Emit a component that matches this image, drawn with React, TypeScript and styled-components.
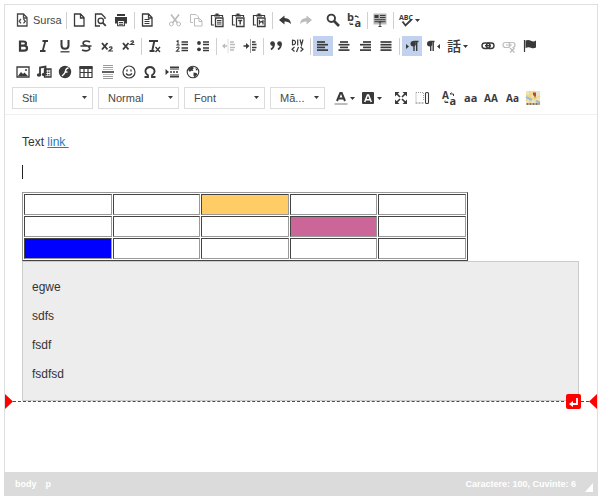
import React from 'react';
import styled, { createGlobalStyle } from 'styled-components';

const INK = '#3a3a3a';

const GlobalStyle = createGlobalStyle`
  *, *::before, *::after { box-sizing: border-box; }
  body {
    margin: 0;
    background: #fff;
    color: #333;
    font-family: "Liberation Sans", Arial, sans-serif;
    font-size: 12px;
  }
`;

const Page = styled.div`
  display: flex;
  flex-direction: column;
  min-height: 100vh;
  padding: 4px 5px 6px 4px;
`;

const Frame = styled.div`
  flex: 1;
  display: flex;
  flex-direction: column;
  border: 1px solid #dfdfdf;
`;

const Toolbar = styled.div`
  padding: 2px 0 3px 8px;
  border-bottom: 1px solid #f0f0f0;
`;

const Row = styled.div<{ $outdent?: boolean }>`
  display: flex;
  align-items: center;
  height: 26px;
  margin-left: ${p => (p.$outdent ? '-1px' : '0')};
`;

const Group = styled.div<{ $lead?: number }>`
  display: flex;
  align-items: center;
  gap: 1px;
  margin-left: ${p => p.$lead ?? 0}px;
`;

const Separator = styled.span`
  width: 1px;
  height: 17px;
  margin: 0 2px 0 3px;
  background: #d0d0d0;
`;

const ToolButton = styled.button<{ $on?: boolean; $menu?: boolean }>`
  display: flex;
  align-items: center;
  gap: 1px;
  width: ${p => (p.$menu ? 26 : 20)}px;
  height: 20px;
  padding: 0 2px;
  border: 0;
  background: ${p => (p.$on ? '#c1d2ee' : 'transparent')};
  color: ${INK};
  &:disabled { color: #bcbcbc; }
`;

const SourceButton = styled(ToolButton)`
  gap: 3px;
  width: 50px;
  padding: 0 0 0 1px;
  color: #484848;
  font: 11px "Liberation Sans", Arial, sans-serif;
`;

const Svg = styled.svg`
  flex: none;
  display: block;
  width: 16px;
  height: 16px;
  overflow: visible;
  fill: none;
  stroke: currentColor;
  text { fill: currentColor; stroke: none; font-family: "Open Sans", "Noto Sans CJK JP", sans-serif; font-weight: 700; }
`;

const CaretSvg = styled.svg`
  flex: none;
  width: 5px;
  height: 3px;
  fill: ${INK};
`;

const Picker = styled.label<{ $narrow?: boolean }>`
  position: relative;
  width: ${p => (p.$narrow ? 55 : 81)}px;
  margin-right: ${p => (p.$narrow ? 6 : 5)}px;
  select {
    display: block;
    width: 100%;
    height: 22px;
    padding: 0 0 0 9px;
    border: 1px solid #dcdcdc;
    border-radius: 0;
    appearance: none;
    background: #fff;
    color: #484848;
    font: 11px "Liberation Sans", Arial, sans-serif;
  }
  svg { position: absolute; right: 6px; top: 9px; pointer-events: none; }
`;

const Editable = styled.div`
  flex: 1;
  padding: 19px 18px 0 17px;
  line-height: 17px;
  outline: none;
  p { margin: 0 0 12px; }
  a { color: #2a7ab8; white-space: pre; }
`;

const TextCursor = styled.span`
  display: block;
  width: 1px;
  height: 14px;
  background: #222;
`;

const CursorLine = styled.p`
  display: flex;
  align-items: center;
  height: 17px;
`;

const Table = styled.table`
  width: 80%;
  border: 1px solid;
  border-color: #999 #444 #444 #999;
  border-collapse: separate;
  border-spacing: 1px;
  table-layout: fixed;
`;

const Cell = styled.td<{ $fill?: string }>`
  height: 21px;
  padding: 1px;
  border: 1px solid;
  border-color: #444 #999 #999 #444;
  background: ${p => p.$fill ?? 'transparent'};
`;

const Block = styled.div`
  padding: 17px 9px 5px;
  border: 1px solid #ccc;
  background: #ededed;
`;

const MagicLine = styled.div`
  position: relative;
  display: flex;
  align-items: center;
  justify-content: space-between;
  height: 15px;
  margin: -7px -18px 0 -17px;
`;

const Dashes = styled.span`
  flex: 1;
  height: 1px;
  border-top: 1px dashed #ff0000;
`;

const EndMark = styled.svg`
  width: 8px;
  height: 15px;
  fill: #f00;
`;

const NewLineButton = styled.button`
  position: absolute;
  right: 16px;
  top: 0;
  width: 15px;
  height: 15px;
  padding: 0;
  border: 0;
  border-radius: 2px;
  background: #f00;
  svg { display: block; width: 15px; height: 15px; }
`;

const StatusBar = styled.div`
  display: flex;
  align-items: center;
  justify-content: space-between;
  height: 24px;
  margin: 0 -1px -1px;
  padding: 0 5px 0 11px;
  background: #dbdbdb;
  color: #fff;
  font-size: 9px;
  font-weight: 700;
  a { margin-right: 9px; color: #fff; text-decoration: none; }
`;

const Count = styled.div`
  display: flex;
  align-items: center;
  gap: 9px;
  svg { width: 8px; height: 9px; margin-top: 7px; fill: #fff; }
`;

const Caret = () => (
  <CaretSvg viewBox="0 0 5 3"><path d="M0 0h5L2.5 3z" /></CaretSvg>
);

const page = <path d="M3.500 2h6l3.500 3.500V14h-9.500zM9.500 2v4H13" strokeWidth="1.300" />;
const clip = (
  <>
    <path d="M5 13H2.500V3.500H5M11 3.500h2.500V5" strokeWidth="1.200" />
    <path d="M5 4.500V2.700h1.500V1.500h3v1.200H11v1.800z" fill="currentColor" stroke="none" />
    <path d="M6.500 6H14v8.500H6.500z" strokeWidth="1.300" />
  </>
);
const bars = (rows: [number, number][]) => (
  <>{rows.map(([x, w], i) => <path key={i} d={`M${x} ${4 + i * 2.7}h${w}`} strokeWidth="1.700" />)}</>
);

const icons: Record<string, React.ReactNode> = {
  source: <>{page}<path d="M7 7 5.200 9.200 7 11.400M9.500 7l1.800 2.200-1.800 2.200" strokeWidth="1.300" /></>,
  newPage: page,
  preview: <><path d="M8 14H3.500V2h6L13 5.500V7" strokeWidth="1.300" /><circle cx="8.800" cy="8.800" r="2.700" strokeWidth="1.300" /><path d="m10.800 10.800 3 3" strokeWidth="1.800" /></>,
  print: <><path d="M2 5h12v6.500h-2V9H4v2.500H2zM4 2h8v2H4z" fill="currentColor" stroke="none" /><path d="M4.600 8.500h6.800v5.200H4.600zM6 10.500h4M6 12.200h4" strokeWidth="1.100" /></>,
  template: <>{page}<path d="M5.500 7.500h5M5.500 9.500h5M5.500 11.500h5" /></>,
  cut: <><path d="M4 2.500 10.500 11M12 2.500 5.500 11" strokeWidth="1.700" /><circle cx="4.300" cy="12" r="1.900" /><circle cx="11.700" cy="12" r="1.900" /></>,
  copy: <><path d="M5 10.500H2.500v-8H8L10.500 5v1" /><path d="M6.500 6.500h5l2.500 2.500v5H6.500zM11 6.500v3h3" /></>,
  paste: <>{clip}<path d="M8 8.500h4.500M8 10.200h4.500M8 12h4.500" /></>,
  pasteText: <>{clip}<path d="M8.200 8.500h4M10.200 8.500v4" strokeWidth="1.400" /></>,
  pasteWord: <>{clip}<path d="M8.500 7.800v4.800M12 7.800v4.800M8.500 10.700l1.750-1.200 1.750 1.200" strokeWidth="1.200" /></>,
  undo: <path d="M2 8 7.500 3.500V6q6 0 6.500 6-2.500-3-6.500-2.500v3z" fill="currentColor" stroke="none" />,
  redo: <path d="M14 8 8.500 3.500V6Q2.500 6 2 12q2.500-3 6.500-2.500v3z" fill="currentColor" stroke="none" />,
  find: <><circle cx="6.300" cy="6.300" r="3.700" strokeWidth="1.900" /><path d="m9 9 5 5" strokeWidth="2.700" /></>,
  replace: <><text x="1" y="9" fontSize="11">b</text><text x="8.500" y="14.500" fontSize="11">a</text><path d="M9 4.500h3v1.500M9 4.500l1.500-1.500M4 10.500v2h3M7 12.500l-1.500-1.500" /></>,
  selectAll: <><path d="M1.500 1.500h13v11h-13z" fill="#b8b8b8" stroke="none" /><path d="M2.500 3h4v3h-4z" fill="currentColor" stroke="none" /><path d="M8 3.500h5.500M8 5.500h5.500M2.500 7.700h11M2.500 9.700h11" /><path d="M8 10v4.500M6.500 10h3M6.500 14.500h3" /></>,
  spell: <><text x="1" y="7.500" fontSize="7">ABC</text><path d="m4.500 9.500 3 4 6-6" strokeWidth="1.800" /></>,
  bold: <path d="M5 2.500v11M4 3.500h4.500q2.500 0 2.500 2T8.500 7.700H5h4q3 0 3 2.500t-3 2.500H4" strokeWidth="2.200" />,
  italic: <path d="M6.500 3h5.500M4 13h5.500M9.300 3 6.700 13" strokeWidth="1.800" />,
  underline: <><path d="M4.500 2v5.500Q4.500 10.700 8 10.700t3.500-3.200V2" strokeWidth="2" /><path d="M3.500 13.800h9" strokeWidth="1.300" /></>,
  strike: <path d="M12 4Q8 2 5.500 4 4 6.500 8 7.500q4.500 1.200 3.500 4-2.500 2.500-7.500.5M2.500 8h11" strokeWidth="1.700" />,
  sub: <><path d="m3 5 5.500 6.500M8.500 5 3 11.500" strokeWidth="1.900" /><path d="M10 9.500q3-1.500 3 .7L10 13h4" strokeWidth="1.200" /></>,
  sup: <><path d="m3 5 5.500 6.500M8.500 5 3 11.500" strokeWidth="1.900" /><path d="M10.500 3.500q3-1.500 3 .7l-3 2.300h4" strokeWidth="1.200" /></>,
  clear: <><path d="M3 3h9M8.300 3l-2 9.500M3.500 13h5" strokeWidth="1.900" /><path d="m9.500 9 4.500 5M14 9l-4.500 5" strokeWidth="1.400" /></>,
  numbered: <><path d="M2.500 3.500 4 2.700V7M2.300 7h3.400M2.300 9.700q3-1.500 2.700.6L2.500 13.200h3.200" strokeWidth="1.100" /><path d="M7.500 4h6.500M7.500 6.500h6.500M7.500 10h6.500M7.500 12.500h6.500" strokeWidth="1.300" /></>,
  bulleted: <><circle cx="4" cy="5" r="1.900" fill="currentColor" stroke="none" /><circle cx="4" cy="11.300" r="1.900" fill="currentColor" stroke="none" /><path d="M8 4h6M8 6.500h6M8 10h6M8 12.500h6" strokeWidth="1.300" /></>,
  outdent: <><path d="M7 1.500v13" strokeDasharray="1 1" /><path d="M2 8h4M4 6 2 8l2 2M9 4h4M9 6.500h5M9 9.500h5M9 12h4" strokeWidth="1.300" /></>,
  indent: <><path d="M8.500 1.500v13" strokeDasharray="1 1" /><path d="M1.500 8H5M10 4h3.500M10 6.500h4.500M10 9.500h4.500M10 12h3.500" strokeWidth="1.400" /><path d="m4 5 3.500 3L4 11z" fill="currentColor" stroke="none" /></>,
  quote: <><circle cx="4.500" cy="5.600" r="2.300" fill="currentColor" stroke="none" /><circle cx="11.500" cy="5.600" r="2.300" fill="currentColor" stroke="none" /><path d="M6 5.500q0 4-3 6M13 5.500q0 4-3 6" strokeWidth="1.800" /></>,
  div: <><path d="M3.500 2v5M3 2q3.500 0 3.500 2.500T3 7M8.700 1.500v6M11 1.500 12.500 7 14 1.500M5.500 9 3 11.200l2.500 2.300M11.500 9l2.500 2.200-2.500 2.300M9.500 9l-2 5" strokeWidth="1.200" /></>,
  left: bars([[2, 8], [2, 11], [2, 8], [2, 11]]),
  center: bars([[4, 8], [2.5, 11], [4, 8], [2.5, 11]]),
  right: bars([[6, 8], [3, 11], [6, 8], [3, 11]]),
  justify: bars([[2.5, 11], [2.5, 11], [2.5, 11], [2.5, 11]]),
  ltr: <><path d="m2 6 3 2.500L2 11z" fill="currentColor" stroke="none" /><path d="M9.500 3.500h5M10 4v9M12.700 4v9" strokeWidth="1.400" /><circle cx="9.200" cy="5.700" r="2.700" fill="currentColor" stroke="none" /></>,
  rtl: <><path d="m15 6-3 2.500 3 2.500z" fill="currentColor" stroke="none" /><path d="M4.500 3.500h5M5.700 4v9M8.200 4v9" strokeWidth="1.400" /><circle cx="4.700" cy="5.700" r="2.700" fill="currentColor" stroke="none" /></>,
  language: <text x="1" y="13" fontSize="14" style={{ fontWeight: 500 }}>話</text>,
  link: <><rect x="2" y="5" width="8" height="5.500" rx="2.700" strokeWidth="1.400" /><rect x="6.500" y="5" width="7.500" height="5.500" rx="2.700" strokeWidth="1.400" /><path d="M5 7.700h6" strokeWidth="1.400" /></>,
  unlink: <><rect x="2" y="4.500" width="7" height="5" rx="2.500" strokeWidth="1.200" /><path d="M7 4.500h4.500Q14 4.500 14 7T11.500 9.500M5 7h6" strokeWidth="1.200" /><path d="m9 10 4.500 4.500M13.500 10 9 14.500" strokeWidth="1.300" /></>,
  anchor: <><path d="M2.500 2v12" strokeWidth="1.200" /><path d="M3.500 2.500q3-1 5.500.3t5-.3v7q-2.500 1.500-5 .3t-5.500.2z" fill="currentColor" stroke="none" /></>,
  image: <><path d="M2 3h12v10H2z" strokeWidth="1.300" /><path d="m3 12 3-4 2 2 1.500-1.500 3.500 3.500z" fill="currentColor" stroke="none" /><circle cx="11" cy="6" r="1" fill="currentColor" stroke="none" /></>,
  media: <><path d="M8.500 5H15v8H8.500z" strokeWidth="1.300" /><path d="M10.700 5v8M12.800 5v8" strokeDasharray="1.500 1" strokeWidth="1.300" /><path d="M4 11V3.500L9.500 2.500V10" strokeWidth="1.800" /><ellipse cx="3" cy="11" rx="2.200" ry="1.800" fill="currentColor" stroke="none" /><ellipse cx="8" cy="10.500" rx="2.200" ry="1.800" fill="currentColor" stroke="none" /></>,
  flash: <><circle cx="8" cy="8" r="6.200" fill="currentColor" stroke="none" /><path d="M11.500 4q-2.500 0-3 3t-3.500 5M7.500 8h3" stroke="#fff" strokeWidth="1.400" /></>,
  table: <><path d="M1.500 2h13v3h-13z" fill="currentColor" stroke="none" /><path d="M2 3h12v10.500H2zM2 8.500h12M6 4v9.500M10 4v9.500" strokeWidth="1.200" /></>,
  rule: <><path d="M3 1.500h10M3 3.500h10M3 12.500h10M3 14.500h10" stroke="#999" /><path d="M3 5.500h10M3 10.500h10" stroke="#bbb" /><path d="M2 8h12" strokeWidth="1.600" /></>,
  smiley: <><circle cx="8" cy="8" r="6" strokeWidth="1.200" /><path d="M5 9.500q3 3.300 6 0M6 5.500v2M10 5.500v2" strokeWidth="1.300" /></>,
  special: <path d="M2.500 13H6v-1.700Q3 9 3.500 6.300 4.500 3 8 3t4.500 3.300Q13 9 10 11.300V13h3.500" strokeWidth="1.800" />,
  pageBreak: <><path d="m1.500 5 3.500 3-3.500 3z" fill="currentColor" stroke="none" /><path d="M6 3.500h9M6 12.500h9" strokeWidth="2" /><path d="M6 5.500h9M6 10.500h9" stroke="#999" /><path d="M6 8h9" strokeDasharray="2 1" strokeWidth="1.400" /></>,
  iframe: <><circle cx="8" cy="8" r="5.800" strokeWidth="1.100" /><path d="m4 4 3-1.500L9 4 7.500 5.500 8.500 7 6 6.700 5 8 3 6zM8.500 8.500l3 .5 1 1.500-3 3-1-2zM10.500 3.500 13 6l-2 .5z" fill="currentColor" stroke="none" /></>,
  textColor: <><path d="M4 11 7.300 3h1.400L12 11M5.500 8.500h5" strokeWidth="2" /><path d="M1.500 14h13" stroke="#999" strokeWidth="1.300" /></>,
  bgColor: <><rect x="2" y="2" width="12" height="12" rx="1" fill="currentColor" stroke="none" /><path d="m4.700 12 2.800-7h1l2.800 7M6 9.700h4" stroke="#fff" strokeWidth="1.500" /></>,
  maximize: <><path d="m3 3 4 4M13 3 9 7M3 13l4-4M13 13 9 9" strokeWidth="1.700" /><path d="M2 2h4.500L2 6.500zM14 2v4.500L9.500 2zM2 14V9.500L6.500 14zM14 14H9.500L14 9.500z" fill="currentColor" stroke="none" /></>,
  blocks: <><path d="M2 2.500h8M2 2.500v9M9.500 3v8" stroke="#999" strokeDasharray="1 1" /><path d="M1.500 13h8" strokeDasharray="2 1" stroke="#777" /><rect x="11.500" y="2.500" width="3" height="11" rx="1" strokeWidth="1.100" /></>,
  changeCase: <><text x="1" y="9" fontSize="10">A</text><text x="8.500" y="15" fontSize="11">a</text><path d="M9 4h3.500v2M9 4l1.500-1.500M4 10.500v2h3M7 12.500l-1.500-1.500" /></>,
  lower: <text x="2" y="12" fontSize="11">aa</text>,
  upper: <text x="1" y="12" fontSize="10">AA</text>,
  capital: <text x="2" y="12" fontSize="10">Aa</text>,
  map: <><path d="M1 1h14v14H1z" fill="#e9e3ce" stroke="none" /><path d="M1 4.500 15 12M5 1v14M1 11l8-10M9 9l6-3" stroke="#f5d875" strokeWidth="1.700" /><path d="m1 7 6 3M11 11l4 2" stroke="#9cbcce" strokeWidth="2" /><path d="M1.500 14h13" stroke="#82705c" strokeWidth="2" strokeDasharray="2 1" /><path d="M8 2.500h3v3l-1 3-1-3H8z" fill="#b64834" stroke="none" /></>,
};

type ToolProps = { id: string; label: string; off?: boolean; on?: boolean; menu?: boolean };

const Tool = ({ id, label, off, on, menu }: ToolProps) => (
  <ToolButton type="button" aria-label={label} title={label} disabled={off} $on={on} $menu={menu}>
    <Svg viewBox="0 0 16 16" aria-hidden="true">{icons[id]}</Svg>
    {menu && <Caret />}
  </ToolButton>
);

const Combo = ({ label, text, narrow }: { label: string; text: string; narrow?: boolean }) => (
  <Picker $narrow={narrow}>
    <select aria-label={label}><option>{text}</option></select>
    <Caret />
  </Picker>
);

const fills: (string | undefined)[][] = [
  [undefined, undefined, '#ffcc66', undefined, undefined],
  [undefined, undefined, undefined, '#cc6699', undefined],
  ['#0000ff', undefined, undefined, undefined, undefined],
];

export default function App() {
  return (
    <Page>
      <GlobalStyle />
      <Frame>
        <Toolbar role="toolbar" aria-label="Editor">
          <Row>
            <SourceButton type="button">
              <Svg viewBox="0 0 16 16" aria-hidden="true">{icons.source}</Svg>Sursa
            </SourceButton>
            <Separator />
            <Group>
              <Tool id="newPage" label="Pagină nouă" />
              <Tool id="preview" label="Previzualizare" />
              <Tool id="print" label="Printează" />
            </Group>
            <Separator />
            <Group><Tool id="template" label="Template-uri" /></Group>
            <Group $lead={8}>
              <Tool id="cut" label="Taie" off />
              <Tool id="copy" label="Copiază" off />
              <Tool id="paste" label="Adaugă" />
              <Tool id="pasteText" label="Adaugă ca text simplu" />
              <Tool id="pasteWord" label="Adaugă din Word" />
            </Group>
            <Separator />
            <Group>
              <Tool id="undo" label="Starea anterioară" />
              <Tool id="redo" label="Starea ulterioară" off />
            </Group>
            <Group $lead={7}>
              <Tool id="find" label="Găseşte" />
              <Tool id="replace" label="Înlocuieşte" />
            </Group>
            <Separator />
            <Group><Tool id="selectAll" label="Selectează tot" /></Group>
            <Separator />
            <Group><Tool id="spell" label="Verifică scrierea" menu /></Group>
          </Row>
          <Row>
            <Group>
              <Tool id="bold" label="Îngroşat" />
              <Tool id="italic" label="Înclinat" />
              <Tool id="underline" label="Subliniat" />
              <Tool id="strike" label="Tăiat" />
              <Tool id="sub" label="Indice" />
              <Tool id="sup" label="Exponent" />
            </Group>
            <Separator />
            <Group><Tool id="clear" label="Înlătură formatarea" /></Group>
            <Group $lead={8}>
              <Tool id="numbered" label="Listă numerotată" />
              <Tool id="bulleted" label="Listă cu puncte" />
            </Group>
            <Separator />
            <Group>
              <Tool id="outdent" label="Scade indentarea" off />
              <Tool id="indent" label="Creşte indentarea" />
            </Group>
            <Separator />
            <Group>
              <Tool id="quote" label="Citat" />
              <Tool id="div" label="Container Div" />
            </Group>
            <Separator />
            <Group>
              <Tool id="left" label="Aliniere la stânga" on />
              <Tool id="center" label="Aliniere centrală" />
              <Tool id="right" label="Aliniere la dreapta" />
              <Tool id="justify" label="Aliniere în bloc" />
            </Group>
            <Separator />
            <Group>
              <Tool id="ltr" label="De la stânga la dreapta" on />
              <Tool id="rtl" label="De la dreapta la stânga" />
              <Tool id="language" label="Limbă" menu />
            </Group>
            <Group $lead={8}>
              <Tool id="link" label="Link" />
              <Tool id="unlink" label="Înlătură link" off />
              <Tool id="anchor" label="Ancoră" />
            </Group>
          </Row>
          <Row>
            <Group>
              <Tool id="image" label="Imagine" />
              <Tool id="media" label="Media" />
              <Tool id="flash" label="Flash" />
              <Tool id="table" label="Tabel" />
            </Group>
            <Group $lead={2}>
              <Tool id="rule" label="Linie orizontală" />
              <Tool id="smiley" label="Figură expresivă" />
              <Tool id="special" label="Caracter special" />
            </Group>
            <Group $lead={2}>
              <Tool id="pageBreak" label="Separator de pagină" />
              <Tool id="iframe" label="IFrame" />
            </Group>
          </Row>
          <Row $outdent>
            <Combo label="Stil" text="Stil" />
            <Combo label="Format" text="Normal" />
            <Combo label="Font" text="Font" />
            <Combo label="Mărime" text="Mă..." narrow />
            <Group>
              <Tool id="textColor" label="Culoarea textului" menu />
              <Tool id="bgColor" label="Coloarea fundalului" menu />
            </Group>
            <Group $lead={7}>
              <Tool id="maximize" label="Mărește" />
              <Tool id="blocks" label="Arată blocurile" />
            </Group>
            <Group $lead={7}>
              <Tool id="changeCase" label="Schimbă literele" />
              <Tool id="lower" label="Litere mici" />
              <Tool id="upper" label="Majuscule" />
              <Tool id="capital" label="Iniţiale majuscule" />
              <Tool id="map" label="Hartă" />
            </Group>
          </Row>
        </Toolbar>
        <Editable>
          <p>Text <a href="#link">{'link '}</a></p>
          <CursorLine><TextCursor /></CursorLine>
          <Table>
            <tbody>
              {fills.map((row, r) => (
                <tr key={r}>{row.map((fill, c) => <Cell key={c} $fill={fill} />)}</tr>
              ))}
            </tbody>
          </Table>
          <Block>
            <p>egwe</p>
            <p>sdfs</p>
            <p>fsdf</p>
            <p>fsdfsd</p>
          </Block>
          <MagicLine>
            <EndMark viewBox="0 0 8 15"><path d="M0 0l8 7.500L0 15z" /></EndMark>
            <Dashes />
            <EndMark viewBox="0 0 8 15"><path d="M8 0 0 7.500 8 15z" /></EndMark>
            <NewLineButton type="button" aria-label="Inserează paragraf aici">
              <svg viewBox="0 0 15 15" aria-hidden="true">
                <path d="M11 4v6H6" fill="none" stroke="#fff" strokeWidth="1.800" />
                <path d="M3 10 7 7v6z" fill="#fff" />
              </svg>
            </NewLineButton>
          </MagicLine>
        </Editable>
        <StatusBar>
          <nav aria-label="Calea elementelor">
            <a href="#body">body</a>
            <a href="#p">p</a>
          </nav>
          <Count>
            <span>Caractere: 100, Cuvinte: 6</span>
            <svg viewBox="0 0 8 9" aria-hidden="true"><path d="M8 0v9H0z" /></svg>
          </Count>
        </StatusBar>
      </Frame>
    </Page>
  );
}
